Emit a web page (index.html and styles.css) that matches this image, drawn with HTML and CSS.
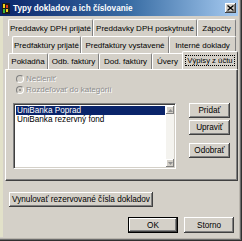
FILE: index.html
```html
<!DOCTYPE html>
<html lang="sk">
<head>
    <meta charset="UTF-8">
    <title>Typy dokladov a ich číslovanie</title>
    <link rel="stylesheet" href="styles.css">
</head>
<body>
<div class="window">
    <!-- Titulok okna -->
    <div class="titlebar">
        <svg class="app-icon" width="8" height="11" viewBox="0 0 8 11">
            <rect x="0" y="0" width="8" height="11" fill="#1c1c1c"/>
            <rect x="1" y="1" width="2" height="4" fill="#f2d21a"/>
            <rect x="4" y="2" width="2" height="3" fill="#e23a1c"/>
            <rect x="1" y="6" width="2" height="4" fill="#3bb43a"/>
            <rect x="4" y="6" width="2" height="3" fill="#f2d21a"/>
        </svg>
        <span class="title">Typy dokladov a ich číslovanie</span>
        <span class="close">
            <svg width="7" height="6" viewBox="0 0 7 6"><path d="M0.5 0.5 L6.5 5.5 M6.5 0.5 L0.5 5.5" stroke="#000" stroke-width="1.3"/></svg>
        </span>
    </div>

    <div class="main">
        <!-- Zalozky v troch riadkoch -->
        <div class="tabs">
            <div class="tab-row row1">
                <div class="tab" style="width:85px">Preddavky DPH prijaté</div>
                <div class="tab" style="width:104px">Preddavky DPH poskytnuté</div>
                <div class="tab" style="width:39px">Zápočty</div>
            </div>
            <div class="tab-row row2">
                <div class="tab" style="width:69px">Predfaktúry prijaté</div>
                <div class="tab" style="width:88px">Predfaktúry vystavené</div>
                <div class="tab" style="width:67px">Interné doklady</div>
            </div>
            <div class="tab-row row3">
                <div class="tab" style="width:40px">Pokladňa</div>
                <div class="tab" style="width:51px">Odb. faktúry</div>
                <div class="tab" style="width:53px">Dod. faktúry</div>
                <div class="tab" style="width:31px">Úvery</div>
                <div class="tab active" style="width:56px"><span class="focus">Výpisy z účtu</span></div>
            </div>
        </div>

        <div class="panel">
            <div class="radio disabled"><span class="circle"></span>Nečleniť</div>
            <div class="radio disabled"><span class="circle checked"></span>Rozdeľovať do kategórií</div>

            <div class="list-area">
                <div class="listbox">
                    <div class="items">
                        <div class="item selected">UniBanka Poprad</div>
                        <div class="item">UniBanka rezervný fond</div>
                    </div>
                    <div class="scrollbar">
                        <span class="arrow">
                            <svg width="5" height="3" viewBox="0 0 5 3"><path d="M0 3 L2.5 0 L5 3 Z" fill="#909090"/></svg>
                        </span>
                        <span class="track"></span>
                        <span class="arrow">
                            <svg width="5" height="3" viewBox="0 0 5 3"><path d="M0 0 L2.5 3 L5 0 Z" fill="#909090"/></svg>
                        </span>
                    </div>
                </div>
                <div class="side-buttons">
                    <button class="btn">Pridať</button>
                    <button class="btn">Upraviť</button>
                    <button class="btn gap">Odobrať</button>
                </div>
            </div>
        </div>

        <div class="reset-row">
            <button class="btn reset">Vynulovať rezervované čísla dokladov</button>
        </div>

        <div class="footer">
            <button class="btn default">OK</button>
            <button class="btn">Storno</button>
        </div>
    </div>
</div>
</body>
</html>
```

FILE: styles.css
```css
* {
    box-sizing: border-box;
}
body {
    margin: 0;
    font-family: 'Liberation Sans', Arial, sans-serif;
    font-size: 8px;
    color: #000;
    background: #d4d0c8;
}
.window {
    width: 242px;
    height: 241px;
    background: #d4d0c8;
    padding: 0 4px 4px 0;
    box-shadow: inset -1px -1px 0 #303030, inset -2px -2px 0 #6c6c6c, inset -3px -3px 0 #b8b4ac;
}

/* titulok */
.titlebar {
    height: 16px;
    display: flex;
    align-items: center;
    background: linear-gradient(to right, #0a246a 0%, #3a6ea5 55%, #a6caf0 100%);
    padding-left: 2px;
}
.app-icon {
    display: block;
    margin-right: 3px;
}
.title {
    color: #fff;
    font-weight: bold;
    font-size: 8.2px;
    flex: 1;
}
.close {
    width: 11px;
    height: 10px;
    margin-right: 2px;
    background: #d4d0c8;
    display: flex;
    align-items: center;
    justify-content: center;
    box-shadow: inset -1px -1px 0 #404040, inset 1px 1px 0 #fff, inset -2px -2px 0 #808080;
}
.close svg {
    display: block;
}

.main {
    border-left: 3px solid #e2e1c9;
    padding: 3px 0 0 2px;
    height: 221px;
}

/* zalozky */
.tab-row {
    display: flex;
    height: 17px;
}
.row1 { margin-left: 3px; }
.row2 { margin-left: 7px; }
.row3 { margin-left: 3px; height: 16px; position: relative; z-index: 2; }
.tab {
    height: 100%;
    display: flex;
    align-items: center;
    justify-content: center;
    white-space: nowrap;
    border-top: 1px solid #fff;
    border-left: 1px solid #fff;
    border-right: 1px solid #808080;
    border-radius: 2px 2px 0 0;
}
.tab.active {
    height: 18px;
    margin-top: -2px;
    margin-left: -1px;
    background: #d4d0c8;
    border-right: 1px solid #404040;
}
.focus {
    outline: 1px dotted #000;
    padding: 0 1px;
    line-height: 9px;
    font-size: 7.7px;
}

/* panel */
.panel {
    width: 233px;
    height: 112px;
    border-top: 1px solid #fff;
    border-left: 1px solid #fff;
    border-right: 1px solid #404040;
    border-bottom: 1px solid #404040;
    box-shadow: inset -1px -1px 0 #808080;
    padding: 3px 0 0 10px;
}
.radio {
    height: 11px;
    display: flex;
    align-items: center;
}
.radio.disabled {
    color: #8c8c8c;
    text-shadow: 1px 1px 0 #fff;
}
.circle {
    width: 8px;
    height: 8px;
    border-radius: 50%;
    margin-right: 2px;
    border: 1px solid;
    border-color: #808080 #fff #fff #808080;
    background: #d4d0c8;
    display: flex;
    align-items: center;
    justify-content: center;
}
.circle.checked::after {
    content: "";
    width: 2px;
    height: 2px;
    border-radius: 50%;
    background: #808080;
}

.list-area {
    display: flex;
    margin-top: 8px;
    margin-left: -3px;
}
.listbox {
    width: 163px;
    height: 66px;
    display: flex;
    background: #fff;
    border-top: 1px solid #808080;
    border-left: 1px solid #808080;
    border-right: 1px solid #fff;
    border-bottom: 1px solid #fff;
    box-shadow: inset 1px 1px 0 #404040, inset -1px -1px 0 #d4d0c8;
    padding: 2px 1px 1px 2px;
    font-size: 8.2px;
}
.items {
    flex: 1;
}
.item {
    height: 9px;
    line-height: 9px;
    padding-left: 1px;
    white-space: nowrap;
}
.item.selected {
    background: #0a246a;
    color: #fff;
    margin-right: 1px;
}
.scrollbar {
    width: 8px;
    display: flex;
    flex-direction: column;
}
.arrow {
    height: 8px;
    background: #d4d0c8;
    display: flex;
    align-items: center;
    justify-content: center;
    box-shadow: inset -1px -1px 0 #808080, inset 1px 1px 0 #fff;
}
.track {
    flex: 1;
    background: #f4f3ef;
}

.side-buttons {
    display: flex;
    flex-direction: column;
    gap: 2px;
    margin-left: 13px;
}
.btn {
    font-family: inherit;
    font-size: 8.2px;
    color: #000;
    background: #d4d0c8;
    border: none;
    padding: 0;
    width: 41px;
    height: 15px;
    box-shadow: inset -1px -1px 0 #404040, inset 1px 1px 0 #fff, inset -2px -2px 0 #808080;
}
.btn.gap {
    margin-top: 6px;
}

.reset-row {
    margin-top: 11px;
    padding-left: 4px;
}
.btn.reset {
    width: 144px;
}

.footer {
    display: flex;
    justify-content: flex-end;
    gap: 6px;
    margin-top: 10px;
    padding-right: 4px;
}
.footer .btn {
    width: 50px;
    height: 16px;
}
.btn.default {
    box-shadow: inset 0 0 0 1px #000, inset -2px -2px 0 #404040, inset 2px 2px 0 #fff, inset -3px -3px 0 #808080;
}
```
